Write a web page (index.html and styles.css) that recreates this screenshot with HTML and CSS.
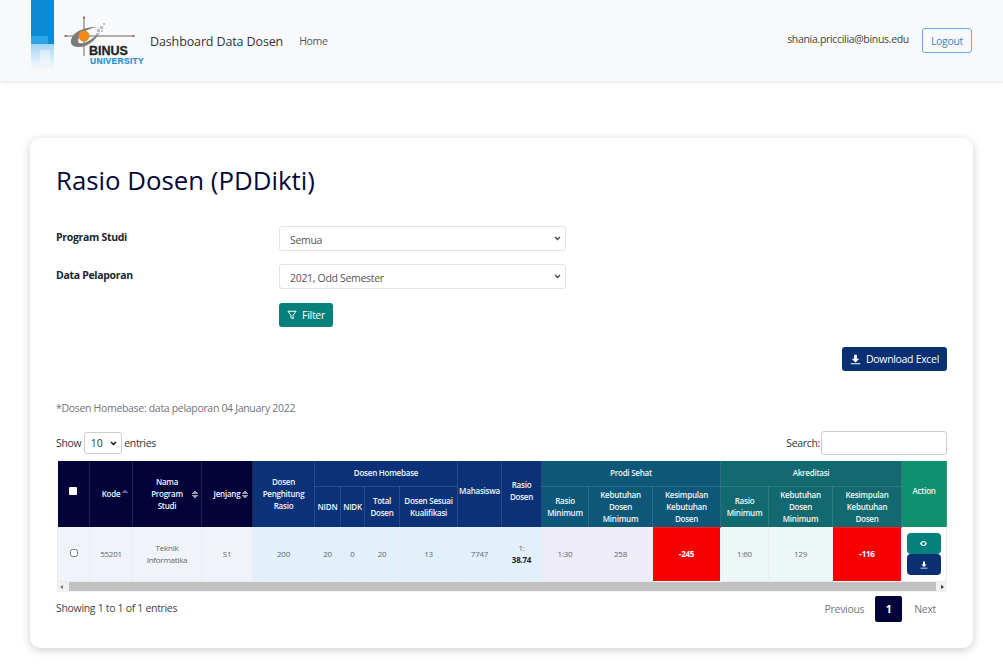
FILE: index.html
```html
<!DOCTYPE html>
<html lang="en">
<head>
<meta charset="utf-8">
<title>Rasio Dosen (PDDikti)</title>
<link rel="stylesheet" href="styles.css">
</head>
<body>
<nav class="navbar">
  <div class="strip"><span class="strip-top"></span><span class="strip-mid"></span><span class="strip-fade"></span></div>
  <div class="logo">
    <svg class="logo-mark" width="72" height="42" viewBox="0 0 72 42">
      <path d="M1 20H70" stroke="#666" stroke-width="1"/>
      <path d="M20 1V40" stroke="#666" stroke-width="1"/>
      <path d="M7 27C6 18 17 11 33 11C23 13 15 17 14 25C14 29 23 29 36 16C31 25 23 31 15 31C11 31 8 30 7 27Z" fill="#7a7a7a"/>
      <circle cx="20" cy="20" r="5.500" fill="#f08a1c"/>
      <g fill="#bdbdbd"><rect x="33" y="13" width="3" height="3"/><rect x="36" y="10" width="3" height="3"/><rect x="32" y="17" width="2" height="2"/><rect x="39" y="7" width="2" height="2"/><rect x="37" y="14" width="2" height="2"/></g>
      <g fill="#b5393c"><circle cx="1.500" cy="20" r="1"/><circle cx="69.500" cy="20" r="1"/><circle cx="20" cy="1.500" r="1"/></g>
    </svg>
    <span class="logo-binus">BINUS</span>
    <span class="logo-univ">UNIVERSITY</span>
  </div>
  <a class="brand">Dashboard Data Dosen</a>
  <a class="nav-link">Home</a>
  <span class="nav-user">shania.priccilia@binus.edu</span>
  <button class="btn-logout">Logout</button>
</nav>

<main class="card">
  <h1 class="title">Rasio Dosen (PDDikti)</h1>
  <div class="form-row">
    <label class="form-label">Program Studi</label>
    <select class="form-select"><option>Semua</option></select>
  </div>
  <div class="form-row">
    <label class="form-label">Data Pelaporan</label>
    <select class="form-select"><option>2021, Odd Semester</option></select>
  </div>
  <div class="filter-row">
    <button class="btn btn-teal">
      <svg width="10" height="10" viewBox="0 0 16 16"><path d="M1.500 2h13L9.700 8.600V14l-3.400-2V8.600z" fill="none" stroke="#fff" stroke-width="1.600" stroke-linejoin="round"/></svg>
      Filter
    </button>
  </div>
  <div class="download-row">
    <button class="btn btn-navy">
      <svg width="11" height="11" viewBox="0 0 16 16"><path d="M6 1h4v6h3.500L8 12.200 2.500 7H6zM1 13.500h14V15H1z" fill="#fff"/></svg>
      Download Excel
    </button>
  </div>
  <p class="note">*Dosen Homebase: data pelaporan 04 January 2022</p>
  <div class="table-tools">
    <div>Show <select class="len-select"><option>10</option></select> entries</div>
    <div class="search">Search:<input class="search-input" type="text"></div>
  </div>
  <table class="data">
    <colgroup>
      <col class="c32"><col class="c43"><col class="c69"><col class="c51"><col class="c62"><col class="c26"><col class="c24"><col class="c35"><col class="c58"><col class="c44"><col class="c40"><col class="c47"><col class="c64"><col class="c68"><col class="c48"><col class="c64"><col class="c69"><col class="c45">
    </colgroup>
    <thead>
      <tr class="row-top">
        <th rowspan="2" class="dark"><input class="head-check" type="checkbox"></th>
        <th rowspan="2" class="dark"><span class="sort-cell">Kode<i class="arrows up-only"></i></span></th>
        <th rowspan="2" class="dark"><span class="sort-cell">Nama<br>Program<br>Studi<i class="arrows far"></i></span></th>
        <th rowspan="2" class="dark"><span class="sort-cell">Jenjang<i class="arrows"></i></span></th>
        <th rowspan="2" class="navy">Dosen<br>Penghitung<br>Rasio</th>
        <th colspan="4" class="navy">Dosen Homebase</th>
        <th rowspan="2" class="navy raise">Mahasiswa</th>
        <th rowspan="2" class="navy raise">Rasio<br>Dosen</th>
        <th colspan="3" class="petrol">Prodi Sehat</th>
        <th colspan="3" class="sea">Akreditasi</th>
        <th rowspan="2" class="green raise">Action</th>
      </tr>
      <tr class="row-sub">
        <th class="navy">NIDN</th>
        <th class="navy">NIDK</th>
        <th class="navy">Total<br>Dosen</th>
        <th class="navy">Dosen Sesuai<br>Kualifikasi</th>
        <th class="petrol">Rasio<br>Minimum</th>
        <th class="petrol">Kebutuhan<br>Dosen<br>Minimum</th>
        <th class="petrol">Kesimpulan<br>Kebutuhan<br>Dosen</th>
        <th class="sea">Rasio<br>Minimum</th>
        <th class="sea">Kebutuhan<br>Dosen<br>Minimum</th>
        <th class="sea">Kesimpulan<br>Kebutuhan<br>Dosen</th>
      </tr>
    </thead>
    <tbody>
      <tr>
        <td class="t-grey"><input class="row-check" type="checkbox"></td>
        <td class="t-grey">55201</td>
        <td class="t-grey">Teknik<br>Informatika</td>
        <td class="t-grey">S1</td>
        <td class="t-blue">200</td>
        <td class="t-blue">20</td>
        <td class="t-blue">0</td>
        <td class="t-blue">20</td>
        <td class="t-blue">13</td>
        <td class="t-blue">7747</td>
        <td class="t-blue">1:<br><b class="ratio">38.74</b></td>
        <td class="t-lilac">1:30</td>
        <td class="t-lilac">258</td>
        <td class="t-red">-245</td>
        <td class="t-mint">1:60</td>
        <td class="t-mint">129</td>
        <td class="t-red">-116</td>
        <td class="t-white">
          <div class="actions">
            <button class="act act-teal"><svg width="7" height="5" viewBox="0 0 14 10"><path d="M7 0C3.500 0 1 3 0 5c1 2 3.500 5 7 5s6-3 7-5c-1-2-3.500-5-7-5zm0 8a3 3 0 1 1 0-6 3 3 0 0 1 0 6z" fill="#fff"/></svg></button>
            <button class="act act-navy"><svg width="8" height="8" viewBox="0 0 16 16"><path d="M6 1h4v6h3.500L8 12 2.500 7H6zM1 13.500h14V15H1z" fill="#fff"/></svg></button>
          </div>
        </td>
      </tr>
    </tbody>
  </table>
  <div class="scrollbar">
    <span class="sb-arrow sb-left"></span>
    <span class="sb-thumb"></span>
    <span class="sb-arrow sb-right"></span>
  </div>
  <div class="table-foot">
    <div class="info">Showing 1 to 1 of 1 entries</div>
    <div class="pager">
      <a class="page-link">Previous</a>
      <a class="page-current">1</a>
      <a class="page-link">Next</a>
    </div>
  </div>
</main>
</body>
</html>
```

FILE: styles.css
```css
* { box-sizing: border-box; }
html, body { margin: 0; height: 671px; overflow: hidden; }
body {
  background: #fff;
  font-family: "Open Sans", "Noto Sans", sans-serif;
  font-size: 10.5px;
  letter-spacing: -.03em;
  color: #212529;
}

/* Navbar */
.navbar {
  display: flex;
  align-items: center;
  height: 81px;
  padding: 0 31px;
  background: #f8f9fa;
  box-shadow: 0 1px 4px rgba(0, 0, 0, .14);
}
.strip {
  display: flex;
  flex-direction: column;
  align-self: flex-start;
  width: 23px;
  height: 70px;
}
.strip-top { height: 36px; background: #0b8ad6; }
.strip-mid { height: 8px; background: linear-gradient(to right, #2aa6e6 75%, #0b8ad6 75%); }
.strip-fade {
  flex: 1;
  background:
    linear-gradient(#d7ebf8, #eff7fc) right 4px top 6px / 10px 14px no-repeat,
    linear-gradient(#a3d3f1, #e3f1fa 70%, #f8f9fa);
}
.logo {
  position: relative;
  width: 96px;
  height: 81px;
  flex: none;
}
.logo-mark { position: absolute; left: 10px; top: 16px; }
.logo-binus {
  position: absolute;
  left: 35px;
  top: 45px;
  font: 700 12.500px/12px "Liberation Sans", sans-serif;
  letter-spacing: 0;
  -webkit-text-stroke: .3px #222;
  color: #222;
}
.logo-univ {
  position: absolute;
  left: 36px;
  top: 57px;
  font: 700 8.500px/8px "Liberation Sans", sans-serif;
  letter-spacing: .3px;
  -webkit-text-stroke: .2px #2b93cc;
  color: #2b93cc;
}
.brand { font-size: 12.500px; line-height: 16px; padding-top: 2px; letter-spacing: -.01em; color: #333; margin-right: 16px; white-space: nowrap; }
.nav-link { font-size: 10.500px; color: #555; }
.nav-user { margin: -3px 13px 0 auto; font-size: 10.500px; color: #444; }
.btn-logout {
  width: 50px;
  height: 25px;
  padding: 0;
  border: 1px solid #6fa8e0;
  border-radius: 3px;
  background: transparent;
  color: #3f83cf;
  font: 10.500px "Open Sans", sans-serif;
  letter-spacing: -.03em;
}

/* Card */
.card {
  width: 943px;
  height: 510px;
  margin: 57px 0 0 30px;
  padding: 24px 26px 0;
  background: #fff;
  border-radius: 10px;
  box-shadow: 0 2px 10px rgba(0, 0, 0, .2);
}
.title {
  margin: 0 0 28px;
  font-size: 25.800px;
  line-height: 36px;
  font-weight: 500;
  letter-spacing: 0;
  color: #070738;
}
.form-row {
  display: grid;
  grid-template-columns: 223px 287px;
  height: 25px;
  margin-bottom: 13px;
}
.form-label { font-weight: 700; font-size: 10.500px; line-height: 22px; color: #212529; }
.form-select {
  appearance: none;
  height: 25px;
  padding: 2px 6px 0 10px;
  border: 1px solid #e0e3e6;
  border-radius: 3px;
  background: #fff url("data:image/svg+xml,%3Csvg xmlns='http://www.w3.org/2000/svg' width='7' height='5' viewBox='0 0 7 5'%3E%3Cpath d='M1 1l2.500 2.500L6 1' fill='none' stroke='%23444' stroke-width='1.300'/%3E%3C/svg%3E") no-repeat right 4px center;
  color: #555;
  font: 10.500px "Open Sans", sans-serif;
  letter-spacing: -.03em;
}
.filter-row { padding: 1px 0 0 223px; }
.btn {
  display: inline-flex;
  align-items: center;
  justify-content: center;
  gap: 5px;
  height: 24px;
  padding: 0;
  border: 0;
  border-radius: 3px;
  color: #fff;
  font: 10.500px "Open Sans", sans-serif;
  letter-spacing: -.03em;
}
.btn-teal { width: 54px; background: #06807a; }
.btn-navy { width: 105px; background: #0b2f73; }
.download-row { display: flex; justify-content: flex-end; margin-top: 20px; }
.note { margin: 29px 0 0; font-size: 10.500px; line-height: 16px; color: #6c757d; }
.table-tools {
  display: flex;
  justify-content: space-between;
  align-items: center;
  height: 24px;
  margin-top: 15px;
  color: #333;
}
.len-select {
  appearance: none;
  width: 38px;
  height: 22px;
  padding: 0 2px 0 6px;
  border: 1px solid #c9ced3;
  border-radius: 3px;
  background: #fff url("data:image/svg+xml,%3Csvg xmlns='http://www.w3.org/2000/svg' width='7' height='5' viewBox='0 0 7 5'%3E%3Cpath d='M1 1l2.500 2.500L6 1' fill='none' stroke='%23111' stroke-width='1.500'/%3E%3C/svg%3E") no-repeat right 4px center;
  font: 10.500px "Open Sans", sans-serif;
  color: #333;
}
.search { display: flex; align-items: center; }
.search-input {
  width: 126px;
  height: 24px;
  margin: 0 0 0 1px;
  border: 1px solid #c9ced3;
  border-radius: 3px;
}

/* Table */
.data {
  width: 889px;
  margin: 6px 0 0 1px;
  table-layout: fixed;
  border-collapse: collapse;
  font-size: 8px;
  line-height: 12px;
  letter-spacing: -.03em;
  text-align: center;
}
.c24 { width: 24px; } .c26 { width: 26px; } .c32 { width: 32px; }
.c35 { width: 35px; } .c40 { width: 40px; } .c43 { width: 43px; }
.c44 { width: 44px; } .c45 { width: 45px; } .c47 { width: 47px; }
.c48 { width: 48px; } .c51 { width: 51px; } .c58 { width: 58px; }
.c62 { width: 62px; } .c64 { width: 64px; } .c68 { width: 68px; }
.c69 { width: 69px; }
.row-top { height: 25px; }
.row-sub { height: 41px; }
.data tbody tr { height: 54px; }
.data th {
  padding: 0 1px;
  color: #f2f4f8;
  font-weight: 600;
  border: 1px solid rgba(255, 255, 255, .12);
  border-top: 0;
}
.data th:first-child { border-left: 0; }
.raise { padding-bottom: 6px !important; }
.dark { background: #03033a; }
.navy { background: #0b3279; }
.petrol { background: #0d5878; }
.sea { background: #126a70; }
.green { background: #10906f; }
.data td { padding: 0; color: #666; border: 1px solid #e8ecf0; }
.t-grey { background: #f0f3f9; }
.t-blue { background: #e2f0fc; }
.t-lilac { background: #eeedf7; }
.t-mint { background: #eef7f8; }
.t-white { background: #fff; }
.t-red { background: #f90000; color: #fff !important; font-weight: 700; border: 1px solid #fff !important; }
.ratio { font-size: 8px; color: #212529; }
.sort-cell { display: inline-block; position: relative; }
.arrows {
  position: absolute;
  right: -8px;
  top: 2px;
  width: 6px;
  height: 9px;
  background:
    linear-gradient(to bottom right, transparent 50%, #9a9ab0 50%) left top / 3px 4px no-repeat,
    linear-gradient(to bottom left, transparent 50%, #9a9ab0 50%) right top / 3px 4px no-repeat,
    linear-gradient(to top right, transparent 50%, #9a9ab0 50%) left bottom / 3px 4px no-repeat,
    linear-gradient(to top left, transparent 50%, #9a9ab0 50%) right bottom / 3px 4px no-repeat;
}
.arrows.up-only {
  top: 1px;
  height: 4px;
  background:
    linear-gradient(to bottom right, transparent 50%, #5a5ab0 50%) left top / 3px 4px no-repeat,
    linear-gradient(to bottom left, transparent 50%, #5a5ab0 50%) right top / 3px 4px no-repeat;
}
.arrows.far { right: -15px; top: 14px; }
.head-check { width: 8px; height: 8px; margin: 0 0 3px; appearance: none; background: #fff; border-radius: 1px; }
.row-check { width: 8px; height: 8px; margin: 0 0 2px; }
.actions { display: flex; flex-direction: column; align-items: center; padding-right: 1px; }
.act {
  display: flex;
  align-items: center;
  justify-content: center;
  width: 34px;
  height: 21px;
  padding: 0;
  border: 0;
  border-radius: 4px;
}
.act-teal { background: #06807a; }
.act-navy { background: #0b2f73; }

/* Scrollbar */
.scrollbar {
  display: flex;
  align-items: center;
  width: 890px;
  height: 10px;
  margin-left: 1px;
  background: #f1f1f1;
}
.sb-arrow { width: 0; height: 0; border-style: solid; border-color: transparent; margin: 0 3px; }
.sb-left { border-width: 2px 3px 2px 0; border-right-color: #777; }
.sb-right { border-width: 2px 0 2px 3px; border-left-color: #333; }
.sb-thumb { flex: 1; height: 9px; margin: 0 2px 0 3px; background: #c1c1c1; }

/* Footer */
.table-foot {
  display: flex;
  justify-content: space-between;
  align-items: center;
  height: 32px;
  margin-top: 1px;
}
.info { color: #444; margin-top: -2px; }
.pager { display: flex; align-items: center; }
.page-link { padding: 0 11px 0 12px; color: #777; }
.page-current {
  width: 27px;
  height: 26px;
  border-radius: 2px;
  background: #03033a;
  color: #fff;
  font-weight: 700;
  line-height: 26px;
  text-align: center;
}
```
